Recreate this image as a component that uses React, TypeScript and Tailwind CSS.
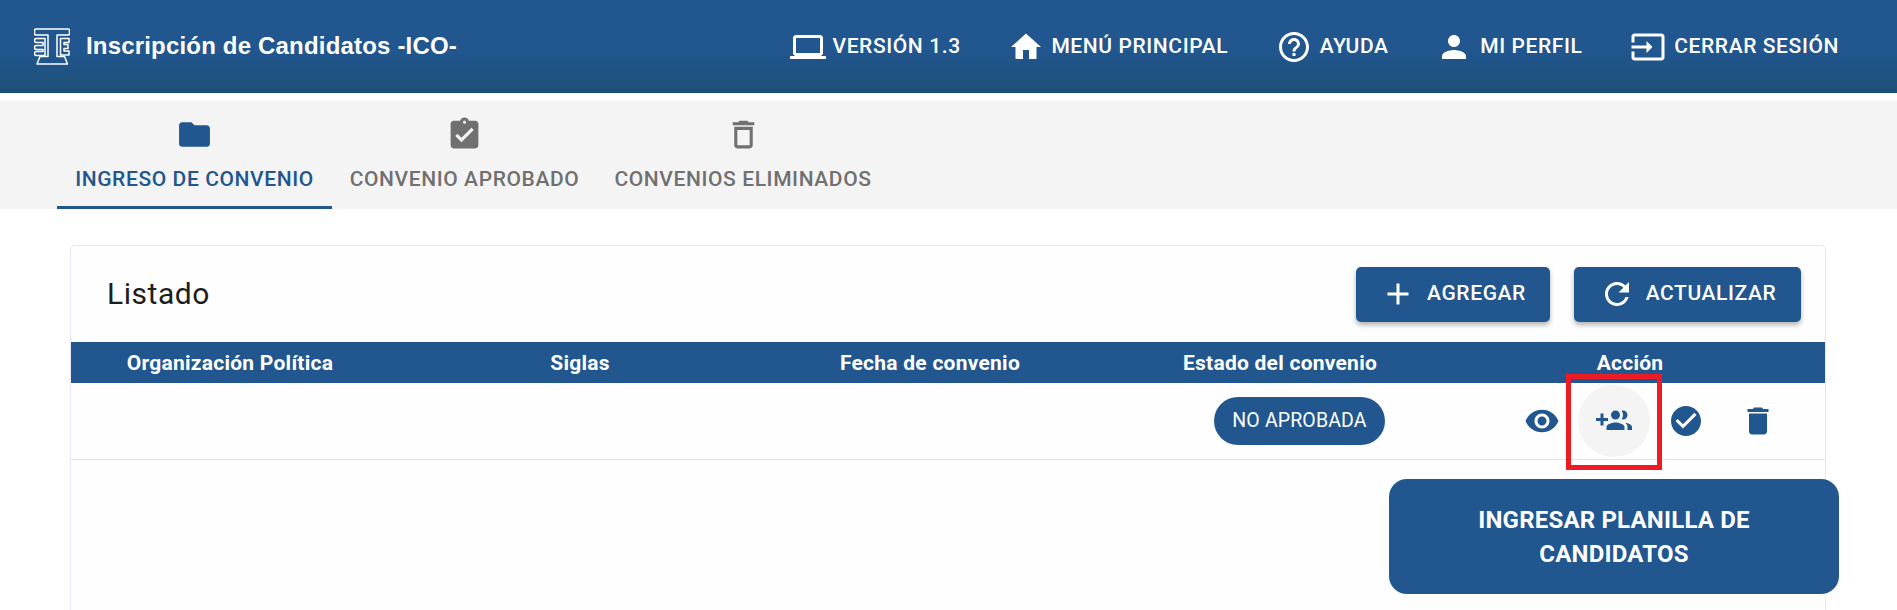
const P = {
  laptop: "M20 18c1.1 0 1.99-.9 1.99-2L22 6c0-1.1-.9-2-2-2H4c-1.1 0-2 .9-2 2v10c0 1.1.9 2 2 2H0v2h24v-2h-4zM4 6h16v10H4V6z",
  home: "M10 20v-6h4v6h5v-8h3L12 3 2 12h3v8z",
  help: "M11 18h2v-2h-2v2zm1-16C6.48 2 2 6.48 2 12s4.48 10 10 10 10-4.48 10-10S17.52 2 12 2zm0 18c-4.41 0-8-3.59-8-8s3.59-8 8-8 8 3.59 8 8-3.59 8-8 8zm0-14c-2.21 0-4 1.79-4 4h2c0-1.1.9-2 2-2s2 .9 2 2c0 2-3 1.75-3 5h2c0-2.25 3-2.5 3-5 0-2.21-1.79-4-4-4z",
  person: "M12 12c2.21 0 4-1.79 4-4s-1.79-4-4-4-4 1.79-4 4 1.79 4 4 4zm0 2c-2.67 0-8 1.34-8 4v2h16v-2c0-2.66-5.33-4-8-4z",
  input: "M21 3.01H3c-1.1 0-2 .9-2 2V9h2V4.99h18v14.03H3V15H1v4.01c0 1.1.9 1.98 2 1.98h18c1.1 0 2-.88 2-1.98v-14c0-1.11-.9-2-2-2zM11 16l4-4-4-4v3H1v2h10v3z",
  folder: "M10 4H4c-1.1 0-1.99.9-1.99 2L2 18c0 1.1.9 2 2 2h16c1.1 0 2-.9 2-2V8c0-1.1-.9-2-2-2h-8l-2-2z",
  assign: "M19 3h-4.18C14.4 1.84 13.3 1 12 1c-1.3 0-2.4.84-2.82 2H5c-1.1 0-2 .9-2 2v14c0 1.1.9 2 2 2h14c1.1 0 2-.9 2-2V5c0-1.1-.9-2-2-2zm-7 0c.55 0 1 .45 1 1s-.45 1-1 1-1-.45-1-1 .45-1 1-1zm-2 14l-4-4 1.41-1.41L10 14.17l6.59-6.59L18 9l-8 8z",
  delOut: "M6 19c0 1.1.9 2 2 2h8c1.1 0 2-.9 2-2V7H6v12zM8 9h8v10H8V9zm7.5-5l-1-1h-5l-1 1H5v2h14V4z",
  add: "M19 13h-6v6h-2v-6H5v-2h6V5h2v6h6v2z",
  refresh: "M17.65 6.35C16.2 4.9 14.21 4 12 4c-4.42 0-7.99 3.58-7.99 8s3.57 8 7.99 8c3.73 0 6.84-2.55 7.73-6h-2.08c-.82 2.33-3.04 4-5.65 4-3.31 0-6-2.69-6-6s2.69-6 6-6c1.66 0 3.14.69 4.22 1.78L13 11h7V4l-2.35 2.35z",
  eye: "M12 4.5C7 4.5 2.73 7.61 1 12c1.73 4.39 6 7.5 11 7.5s9.27-3.11 11-7.5c-1.73-4.39-6-7.5-11-7.5zM12 17c-2.76 0-5-2.24-5-5s2.24-5 5-5 5 2.24 5 5-2.24 5-5 5zm0-8c-1.66 0-3 1.34-3 3s1.34 3 3 3 3-1.34 3-3-1.34-3-3-3z",
  group: "M8 10H5V7H3v3H0v2h3v3h2v-3h3v-2zm10 1c1.66 0 2.99-1.34 2.99-3S19.66 5 18 5c-.32 0-.63.05-.91.14.57.81.9 1.79.9 2.86s-.34 2.04-.9 2.86c.28.09.59.14.91.14zm-5 0c1.66 0 2.99-1.34 2.99-3S14.66 5 13 5c-1.66 0-3 1.34-3 3s1.34 3 3 3zm6.62 2.16c.83.73 1.38 1.66 1.38 2.84v2h3v-2c0-1.54-2.37-2.49-4.38-2.84zM13 13c-2 0-6 1-6 3v2h12v-2c0-2-4-3-6-3z",
  check: "M12 2C6.48 2 2 6.48 2 12s4.48 10 10 10 10-4.48 10-10S17.52 2 12 2zm-2 15l-5-5 1.41-1.41L10 14.17l7.59-7.59L19 8l-9 9z",
  del: "M6 19c0 1.1.9 2 2 2h8c1.1 0 2-.9 2-2V7H6v12zM19 4h-3.5l-1-1h-5l-1 1H5v2h14V4z",
};

function I({ d, className }: { d: string; className: string }) {
  return (
    <svg viewBox="0 0 24 24" fill="currentColor" className={className}>
      <path d={d} />
    </svg>
  );
}

function Logo() {
  return (
    <svg viewBox="0 0 36 38" fill="none" stroke="white" strokeWidth="1.5" strokeLinejoin="round" className="h-[38px] w-[36px] shrink-0">
      <path d="M2 1h32q1.5 0 1.5 1.5v3q0 1.5-1.5 1.5H23v21.5h7.5l3 7.5H3l3-7.5h8V7H2q-1.5 0-1.5-1.5v-3Q.5 1 2 1z" />
      <path d="M11 10.5H2.5q-2 0-2 2t2 2H9v3H2.5q-2 0-2 2t2 2H9v2H2.5q-2 0-2 2t2 2H11z" />
      <path d="M35 10.5H26.5V27H35v-4H30v-2.5h4v-4h-4V14.5h5z" />
    </svg>
  );
}

function Nav({ d, label, gap }: { d: string; label: string; gap: string }) {
  return (
    <div className={`flex items-center ${gap}`}>
      <I d={d} className="h-[36px] w-[36px]" />
      <span className="text-[21px] font-medium tracking-[0.6px] whitespace-nowrap">{label}</span>
    </div>
  );
}

function Tab({ d, label, active, w }: { d: string; label: string; active?: boolean; w: string }) {
  return (
    <div className={`flex h-[108px] flex-col items-center pt-[15px] ${w} ${active ? "border-b-[3px] border-[#21568f] text-[#21568f]" : "text-[#707070]"}`}>
      <I d={d} className="h-[37px] w-[37px]" />
      <span className="mt-[11px] text-[21px] font-medium tracking-[0.6px] whitespace-nowrap">{label}</span>
    </div>
  );
}

function Btn({ d, label, w }: { d: string; label: string; w: string }) {
  return (
    <div className={`flex h-[55px] items-center justify-center gap-[11px] rounded-[5px] bg-[#21568f] text-white shadow-[0_3px_5px_rgba(0,0,0,0.3)] ${w}`}>
      <I d={d} className="h-[36px] w-[36px]" />
      <span className="text-[21px] font-medium tracking-[0.6px]">{label}</span>
    </div>
  );
}

export default function App() {
  return (
    <div className="h-[610px] overflow-hidden bg-white font-['Roboto',sans-serif]">
      <header className="flex h-[93px] items-center justify-between bg-gradient-to-b from-[#21568f] from-55% to-[#1d4f75] pr-[58px] pl-[34px] text-white">
        <div className="flex items-center gap-[16px]">
          <Logo />
          <span className="-translate-y-px font-['Liberation_Sans',sans-serif] text-[24px] font-bold tracking-[0.18px]">Inscripción de Candidatos -ICO-</span>
        </div>
        <div className="flex items-center gap-[47.7px]">
          <Nav d={P.laptop} label="VERSIÓN 1.3" gap="gap-[7px]" />
          <Nav d={P.home} label="MENÚ PRINCIPAL" gap="gap-[7px]" />
          <Nav d={P.help} label="AYUDA" gap="gap-[8px]" />
          <Nav d={P.person} label="MI PERFIL" gap="gap-[8px]" />
          <Nav d={P.input} label="CERRAR SESIÓN" gap="gap-[8px]" />
        </div>
      </header>

      <nav className="mt-[8px] flex h-[108px] bg-[#f4f4f4] pl-[57px]">
        <Tab d={P.folder} label="INGRESO DE CONVENIO" active w="w-[275px]" />
        <Tab d={P.assign} label="CONVENIO APROBADO" w="w-[265px]" />
        <Tab d={P.delOut} label="CONVENIOS ELIMINADOS" w="w-[292px]" />
      </nav>

      <section className="mt-[36px] mr-[71px] ml-[70px] h-[400px] rounded-t-[5px] border border-[#e8e8f2] bg-[#fefefe]">
        <div className="flex h-[96px] items-center justify-between pr-[24px] pl-[36px]">
          <h2 className="-translate-y-px text-[30px] font-normal tracking-[0.55px] text-[#1d1d1d]">Listado</h2>
          <div className="flex gap-[24px]">
            <Btn d={P.add} label="AGREGAR" w="w-[194px]" />
            <Btn d={P.refresh} label="ACTUALIZAR" w="w-[227px]" />
          </div>
        </div>
        <div className="grid h-[41px] grid-cols-[repeat(5,350px)] items-center bg-[#21568f] pt-[2px] text-center text-[21px] font-bold tracking-[0.25px] text-white">
          <span className="-ml-[32px]">Organización Política</span>
          <span className="-ml-[32px]">Siglas</span>
          <span className="-ml-[32px]">Fecha de convenio</span>
          <span className="-ml-[32px]">Estado del convenio</span>
          <span className="-ml-[32px]">Acción</span>
        </div>
        <div className="flex h-[77px] items-center justify-end border-b border-[#e2e2e6] pr-[31px]">
          <span className="mr-[121px] flex h-[48px] w-[171px] items-center justify-center rounded-full bg-[#21568f] text-[19.5px] tracking-[0.15px] text-white">NO APROBADA</span>
          <div className="flex text-[#21568f]">
            <div className="flex h-[72px] w-[72px] items-center justify-center"><I d={P.eye} className="h-[36px] w-[36px]" /></div>
            <div className="flex h-[72px] w-[72px] items-center justify-center rounded-full bg-[#f4f4f4]"><I d={P.group} className="h-[36px] w-[36px]" /></div>
            <div className="flex h-[72px] w-[72px] items-center justify-center"><I d={P.check} className="h-[36px] w-[36px]" /></div>
            <div className="flex h-[72px] w-[72px] items-center justify-center"><I d={P.del} className="h-[36px] w-[36px]" /></div>
          </div>
        </div>
      </section>

      <div className="absolute top-[374px] left-[1566px] h-[96px] w-[96px] border-[5px] border-[#ed1c24]" />
      <div className="absolute top-[479px] left-[1389px] flex h-[115px] w-[450px] items-center justify-center rounded-[18px] bg-[#21568f] px-[60px] text-center text-[24px] leading-[34px] font-bold tracking-[0.2px] text-white">
        INGRESAR PLANILLA DE CANDIDATOS
      </div>
    </div>
  );
}
